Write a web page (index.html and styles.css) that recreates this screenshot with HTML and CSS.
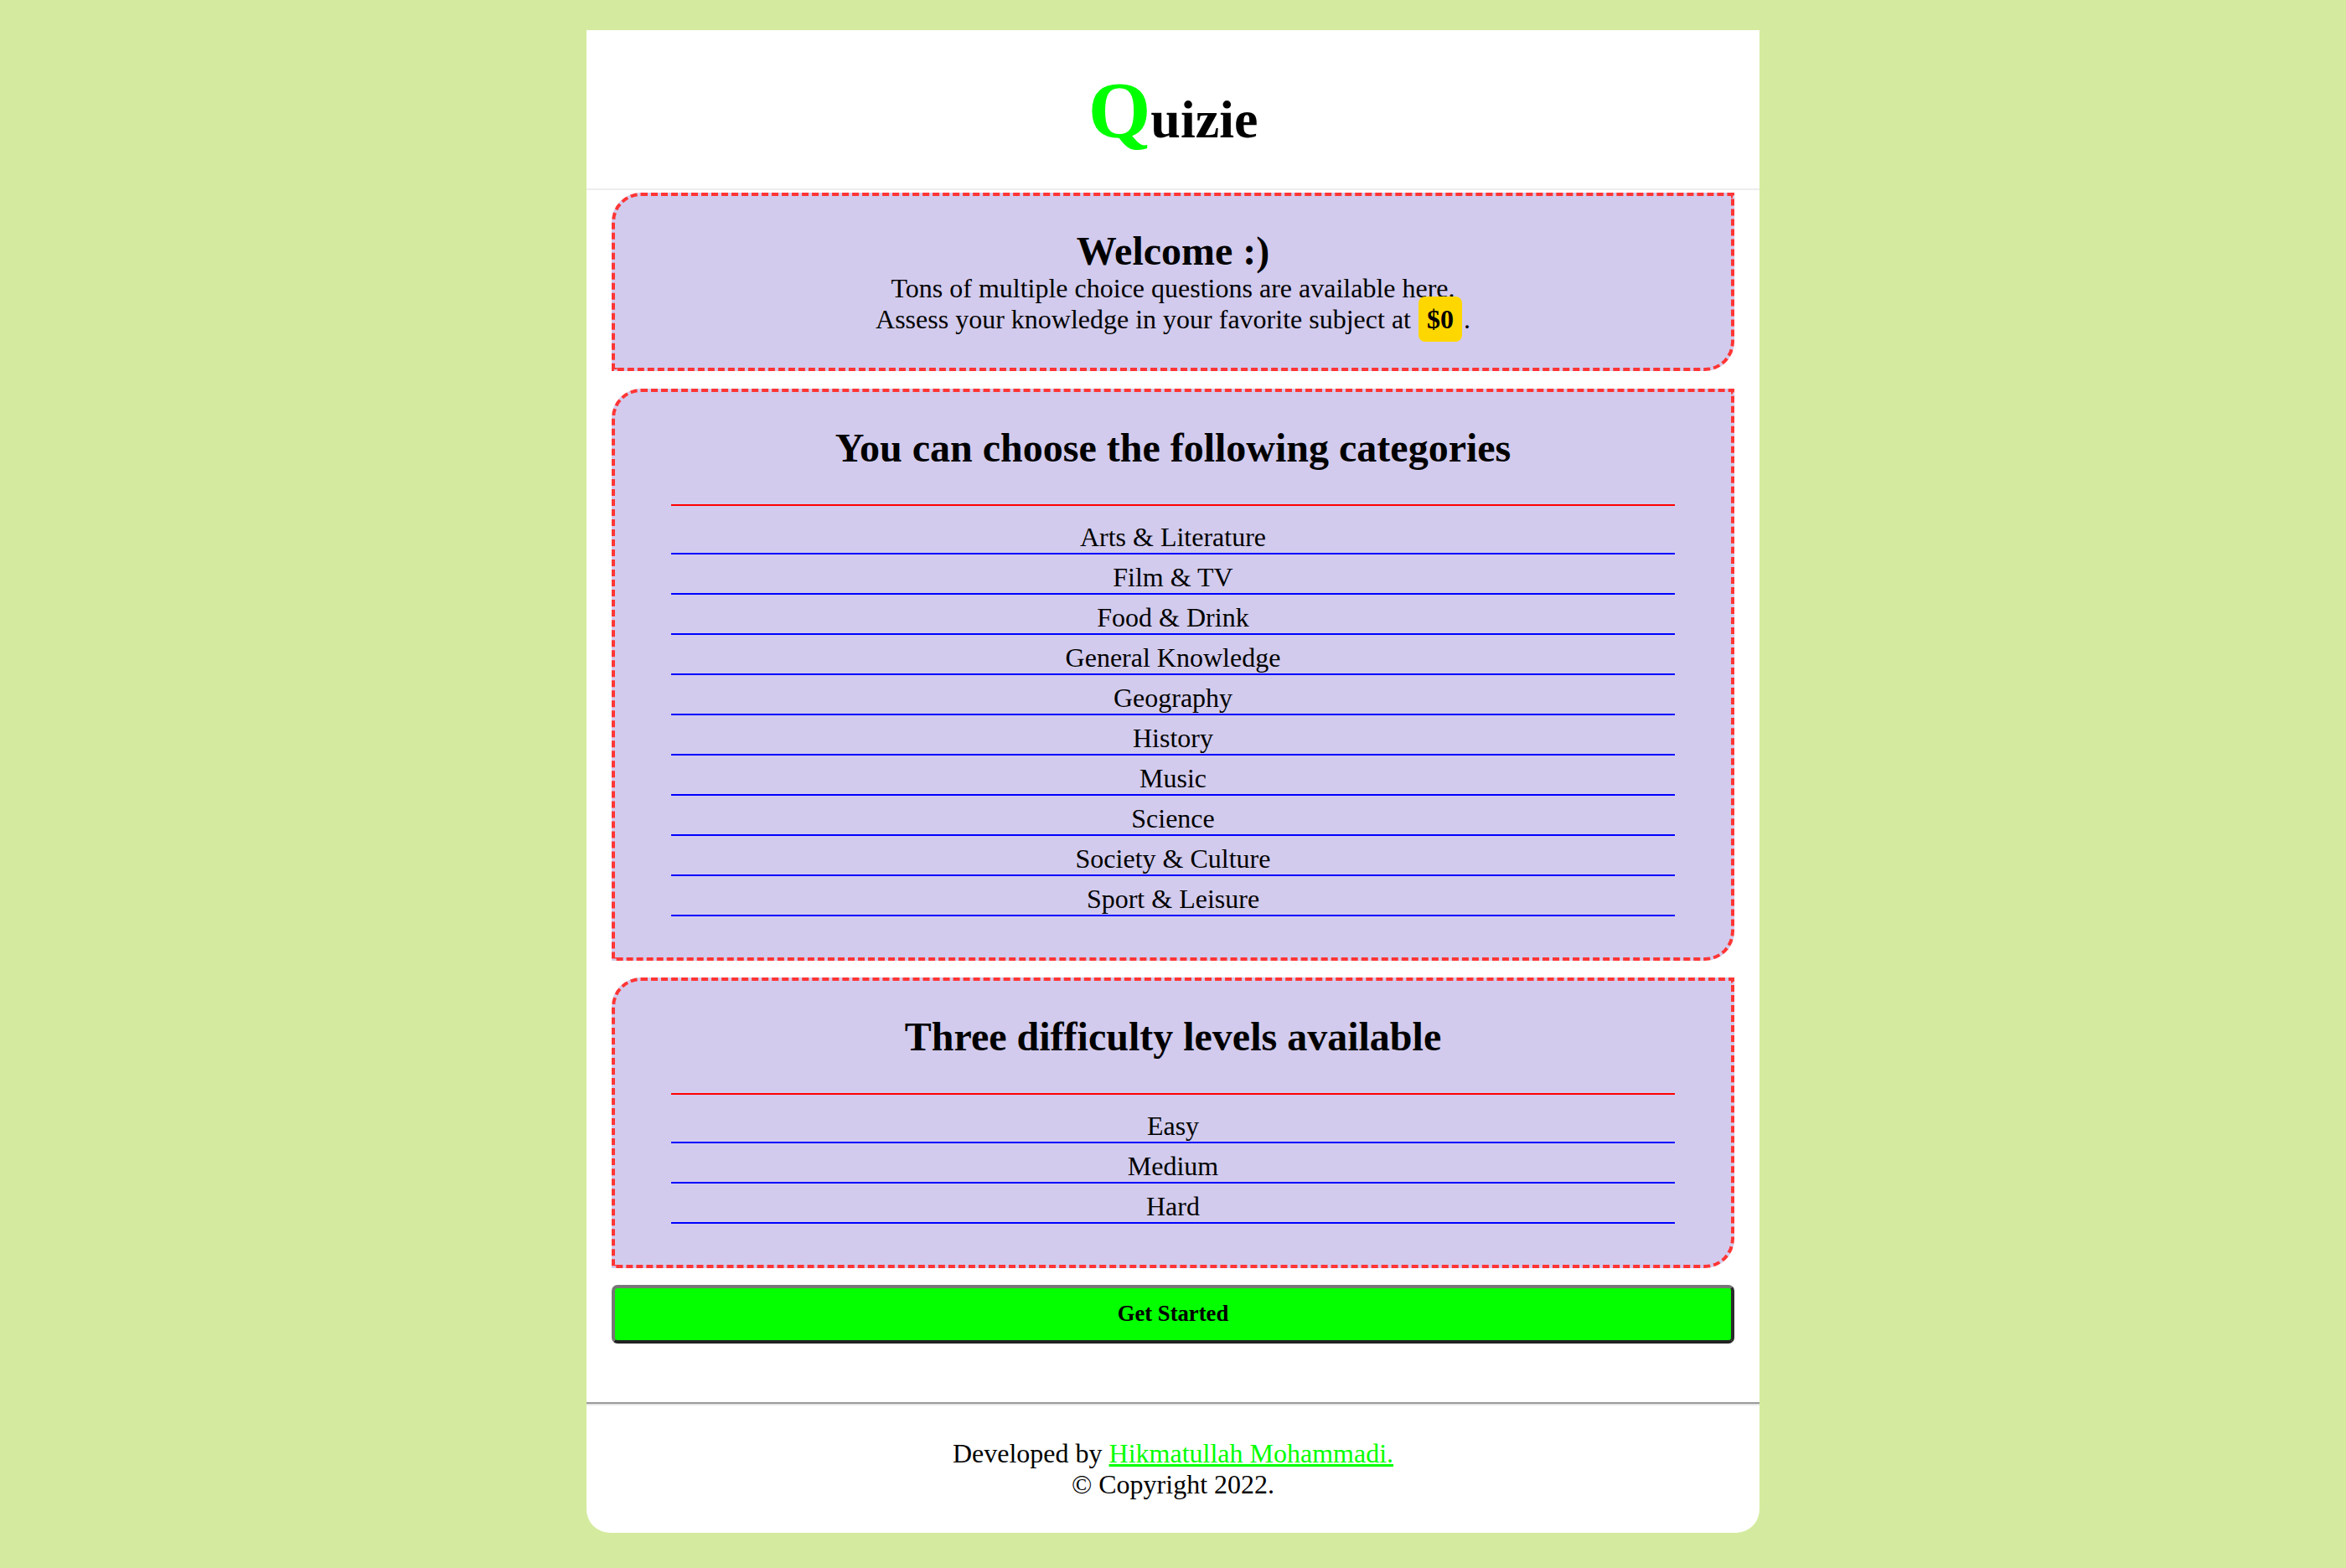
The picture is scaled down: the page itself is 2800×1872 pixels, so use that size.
FILE: index.html
```html
<!DOCTYPE html>
<html lang="en">
<head>
<meta charset="utf-8">
<title>Quizie</title>
<link rel="stylesheet" href="styles.css">
</head>
<body>
<div class="card">
  <header class="header">
    <h1 class="logo"><span class="logo-q">Q</span>uizie</h1>
  </header>
  <main class="main">
    <section class="box welcome">
      <h2 class="welcome-title">Welcome :)</h2>
      <p class="welcome-text">Tons of multiple choice questions are available here.<br>Assess your knowledge in your favorite subject at <span class="price">$0</span>.</p>
    </section>
    <section class="box">
      <h2 class="box-title">You can choose the following categories</h2>
      <hr class="red-rule">
      <ul class="list">
        <li>Arts &amp; Literature</li>
        <li>Film &amp; TV</li>
        <li>Food &amp; Drink</li>
        <li>General Knowledge</li>
        <li>Geography</li>
        <li>History</li>
        <li>Music</li>
        <li>Science</li>
        <li>Society &amp; Culture</li>
        <li>Sport &amp; Leisure</li>
      </ul>
    </section>
    <section class="box">
      <h2 class="box-title">Three difficulty levels available</h2>
      <hr class="red-rule">
      <ul class="list">
        <li>Easy</li>
        <li>Medium</li>
        <li>Hard</li>
      </ul>
    </section>
    <button class="start" type="button">Get Started</button>
  </main>
  <hr class="footer-rule">
  <footer class="footer">
    <p class="footer-text">Developed by <a class="footer-link" href="#">Hikmatullah Mohammadi.</a><br>&copy; Copyright 2022.</p>
  </footer>
</div>
</body>
</html>
```
FILE: styles.css
```css
html, body {
  margin: 0;
  padding: 0;
}
body {
  background: #d4eb9f;
  font-family: "Liberation Serif", "Times New Roman", serif;
  font-size: 32px;
  color: #000;
  padding-top: 36px;
}
.card {
  width: 1400px;
  margin: 0 auto;
  background: #fff;
  border-radius: 0 0 28px 28px;
}
.header {
  padding: 48px 0 45px;
  border-bottom: 2px solid #ededed;
  text-align: center;
}
.logo {
  margin: 0;
  font-size: 64px;
  line-height: 64px;
  font-weight: bold;
}
.logo-q {
  font-size: 96px;
  line-height: 96px;
  color: #00ff00;
}
.main {
  padding: 3px 30px 70px;
  display: flex;
  flex-direction: column;
  gap: 20px;
}
.box {
  background: #d2cbed;
  border: 4px dashed #ff3535;
  border-radius: 35px 0 35px 0;
  text-align: center;
}
.welcome {
  padding-bottom: 39px;
  margin-bottom: 1px;
}
.welcome-title {
  margin: 40px 0 0;
  font-size: 48px;
  line-height: 52px;
}
.welcome-text {
  margin: 0;
  line-height: 37px;
}
.price {
  background: #ffd700;
  font-weight: bold;
  padding: 9px 10px;
  border-radius: 8px;
  margin-left: 1px;
  margin-right: 2px;
}
.box-title {
  margin: 39px 0 40px;
  font-size: 48px;
  line-height: 55px;
}
.red-rule {
  width: 90%;
  margin: 0 auto 10px;
  border: 0;
  height: 2px;
  background: #ff0000;
}
.list {
  list-style: none;
  width: 90%;
  margin: 0 auto 49px;
  padding: 0;
}
.list li {
  padding-top: 8px;
  line-height: 38px;
  border-bottom: 2px solid #0000ff;
}
.start {
  display: block;
  width: 100%;
  padding: 15px 0 16px;
  background: #04ff00;
  border: 4px solid;
  border-color: #767676 #2a2a2a #222 #767676;
  border-radius: 7px;
  font-family: "Liberation Serif", "Times New Roman", serif;
  font-size: 26.67px;
  line-height: 31px;
  font-weight: bold;
  color: #000;
}
.footer-rule {
  margin: 0;
  height: 0;
  border: 0;
  border-top: 2px solid #9a9a9a;
  border-bottom: 2px solid #e8e8e8;
}
.footer {
  padding: 39px 0 39px;
  text-align: center;
}
.footer-text {
  margin: 0;
}
.footer-link {
  color: #00ff00;
  text-decoration: underline;
}
```
